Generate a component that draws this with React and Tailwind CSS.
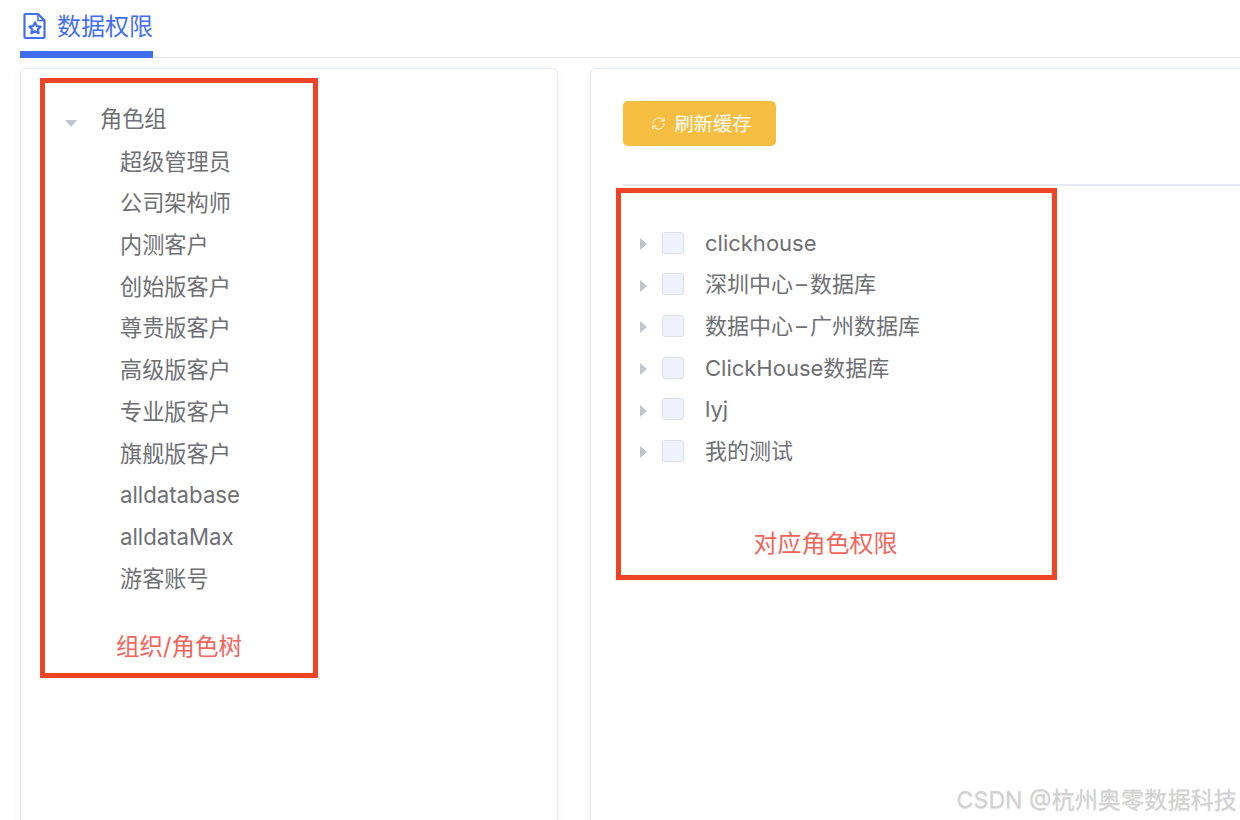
import { RefreshCw } from "lucide-react";

const FONT = "font-['Inter','Noto_Sans_CJK_SC',sans-serif]";

const roles = [
    "超级管理员",
    "公司架构师",
    "内测客户",
    "创始版客户",
    "尊贵版客户",
    "高级版客户",
    "专业版客户",
    "旗舰版客户",
    "alldatabase",
    "alldataMax",
    "游客账号",
];

const databases = [
    ["clickhouse"],
    ["深圳中心", "数据库"],
    ["数据中心", "广州数据库"],
    ["ClickHouse数据库"],
    ["lyj"],
    ["我的测试"],
];

function TabIcon() {
    return (
        <svg className="shrink-0" width="24" height="28" viewBox="0 0 24 28" fill="none" stroke="#3f6ff0" strokeWidth="2.200">
            <path d="M2.500 2h12.500l6.500 6.500v16a1.500 1.500 0 0 1-1.500 1.500H2.500a1 1 0 0 1-1-1V3a1 1 0 0 1 1-1z" />
            <path d="M15 2v6.500h6.500" strokeWidth="1.500" />
            <path
                d="M12 10.500l1.800 3.500 3.900.6-2.800 2.700.7 3.900-3.600-1.900-3.600 1.900.7-3.900-2.800-2.700 3.900-.6z"
                strokeWidth="2.200"
                strokeLinejoin="round"
            />
        </svg>
    );
}

function RoleTree() {
    return (
        <div className="pl-[44px] pt-[29px] text-[22.200px] text-[#6e7074]">
            <div className="flex h-[42px] items-center">
                <span className="mt-[8px] h-0 w-0 shrink-0 border-x-[6px] border-t-[7px] border-x-transparent border-t-[#c0c4cc]" />
                <span className="ml-[23px] leading-none">角色组</span>
            </div>
            <div className="pt-[1px]">
                {roles.map((role) => (
                    <div key={role} className="flex h-[41.7px] items-center pl-[55px] leading-none">
                        {role}
                    </div>
                ))}
            </div>
        </div>
    );
}

function DatabaseRow({ parts }) {
    return (
        <div className="flex h-[41.6px] items-center text-[22px] text-[#6e7074]">
            <span className="mt-[3px] h-0 w-0 shrink-0 border-y-[6px] border-l-[7px] border-y-transparent border-l-[#c0c4cc]" />
            <span className="ml-[15px] h-[22px] w-[22px] shrink-0 rounded-[3px] border border-[#dcdfe6] bg-[#edf2fc]" />
            <span className="ml-[21px] leading-none">
                {parts[0]}
                {parts[1] && <span className="px-[3px]">–</span>}
                {parts[1]}
            </span>
        </div>
    );
}

export default function App() {
    return (
        <div className={`relative h-[820px] w-[1240px] overflow-hidden bg-white ${FONT}`}>
            <div className="ml-[20px] flex h-[58px] border-b border-[#e4e7ed]">
                <div className="flex h-[58px] w-[133px] shrink-0 items-start gap-[10px] border-b-[7px] border-[#3f6ff0] pl-[3px] pt-[12px]">
                    <TabIcon />
                    <span className="whitespace-nowrap text-[24px] leading-[30px] text-[#3f6ff0]">数据权限</span>
                </div>
            </div>

            <div className="mt-[10px] flex gap-[32px] pl-[20px]">
                <div className="h-[800px] w-[538px] shrink-0 rounded-[6px] border border-[#e6ebf5] shadow-[0_2px_12px_rgba(0,0,0,0.05)]">
                    <RoleTree />
                </div>

                <div className="h-[800px] w-[700px] shrink-0 rounded-[6px] border border-[#e6ebf5] shadow-[0_2px_12px_rgba(0,0,0,0.05)]">
                    <div className="pl-[32px] pt-[32px]">
                        <button className="flex h-[45px] w-[153px] items-center justify-center gap-[9px] rounded-[5px] bg-[#f6be41] pl-[3px] text-[19.250px] text-white">
                            <RefreshCw size={15} strokeWidth={1.500} />
                            <span className="pt-[2px] leading-none">刷新缓存</span>
                        </button>
                        <div className="mt-[38px] border-t-2 border-[#e4e7ed]" />
                        <div className="pt-[36px] pl-[17px]">
                            {databases.map((parts) => (
                                <DatabaseRow key={parts.join("-")} parts={parts} />
                            ))}
                        </div>
                    </div>
                </div>
            </div>

            {/* annotations drawn on top of the screenshot */}
            <div className="absolute left-[40px] top-[78px] flex h-[600px] w-[278px] items-end justify-center border-[5px] border-[#ee4426] pb-[15px]">
                <span className="whitespace-nowrap text-[23.500px] leading-none text-[#f2645a]">组织/角色树</span>
            </div>
            <div className="absolute left-[616px] top-[188px] flex h-[392px] w-[441px] items-end justify-center border-[5px] border-[#ee4426] pb-[19px] pr-[22px]">
                <span className="whitespace-nowrap text-[24px] leading-none text-[#f2645a]">对应角色权限</span>
            </div>

            <div className="absolute right-[3px] top-[785px] whitespace-nowrap text-[23.200px] leading-[30px] text-[#d2d2d2] [text-shadow:0_1px_1px_rgba(0,0,0,0.12)]">
                CSDN @杭州奥零数据科技
            </div>
        </div>
    );
}
